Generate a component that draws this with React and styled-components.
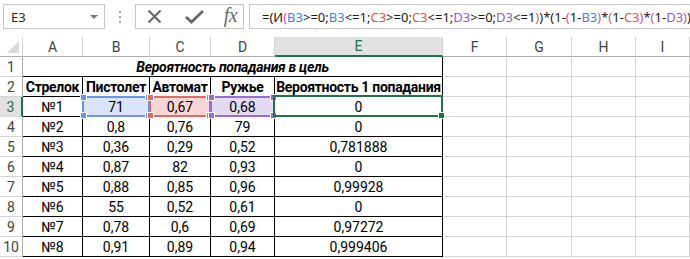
import React from 'react';
import styled, { createGlobalStyle, css } from 'styled-components';

const GlobalStyle = createGlobalStyle`
  html, body {
    margin: 0;
    padding: 0;
    background: #fff;
  }
  body {
    font-family: Roboto, "Liberation Sans", sans-serif;
    overflow: hidden;
  }
`;

const GREEN = '#217346';

const FormulaBar = styled.div`
  display: flex;
  align-items: center;
  height: 37px;
  box-sizing: border-box;
  padding: 3px 0 7px 3px;
  gap: 0;
`;

const NameBox = styled.div`
  width: 102px;
  height: 25px;
  box-sizing: border-box;
  border: 1px solid #c6c6c6;
  display: flex;
  align-items: center;
  justify-content: space-between;
  padding: 0 6px 0 7px;
  font-family: "Noto Sans", "Open Sans", sans-serif;
  font-size: 13px;
  color: #262626;
`;

const DropArrow = styled.span`
  width: 0;
  height: 0;
  border-left: 4px solid transparent;
  border-right: 4px solid transparent;
  border-top: 4px solid #7a7a7a;
  margin-top: 1px;
`;

const Grip = styled.div`
  width: 30px;
  display: flex;
  flex-direction: column;
  align-items: center;
  gap: 3px;

  span {
    width: 2px;
    height: 2px;
    background: #a6a6a6;
  }
`;

const Buttons = styled.div`
  width: 109px;
  height: 25px;
  box-sizing: border-box;
  border: 1px solid #c6c6c6;
  display: flex;
  align-items: center;
  padding-left: 11px;
`;

const IconSlot = styled.div`
  width: ${(p) => p.$w}px;
  display: flex;
  align-items: center;
`;

const Fx = styled.span`
  font-family: "Liberation Serif", serif;
  font-style: italic;
  font-size: 20px;
  color: #6a6a6a;
  line-height: 1;
  margin-top: -3px;
  letter-spacing: -0.5px;
`;

const FormulaInput = styled.div`
  flex: 1;
  margin-left: 5px;
  height: 25px;
  box-sizing: border-box;
  border: 1px solid #c6c6c6;
  border-right: none;
  display: flex;
  align-items: center;
  padding-left: 12px;
  white-space: nowrap;
  overflow: hidden;
  font-family: "Noto Sans", "Open Sans", sans-serif;
  font-size: 13px;
  color: #1a1a1a;
`;

const refColors = {
  b: '#4f7fe0',
  c: '#e05353',
  d: '#8a5cc8',
  p: '#e0508a',
};

const Tok = styled.span`
  color: ${(p) => refColors[p.$c] || 'inherit'};
`;

const Sheet = styled.div`
  display: grid;
  grid-template-columns: 23px 60px 67px 61px 64px 168px 64px 65px 64px 1fr;
  grid-auto-rows: 20px;
  font-family: Roboto, "Liberation Sans", sans-serif;
  font-size: 14px;
  color: #000;
`;

const Corner = styled.div`
  box-sizing: border-box;
  border-right: 1px solid #d4d4d4;
  border-bottom: 1px solid #ababab;
  position: relative;

  &::after {
    content: '';
    position: absolute;
    right: 3px;
    bottom: 3px;
    width: 0;
    height: 0;
    border-left: 12px solid transparent;
    border-bottom: 12px solid #dadada;
  }
`;

const ColHead = styled.div`
  box-sizing: border-box;
  border-right: 1px solid #d4d4d4;
  border-bottom: 1px solid #ababab;
  display: flex;
  align-items: center;
  justify-content: center;
  color: #444;
  font-size: 14px;
  ${(p) =>
    p.$active &&
    css`
      background: #e1e1e1;
      color: ${GREEN};
      border-bottom: 2px solid ${GREEN};
    `}
`;

const RowHead = styled.div`
  box-sizing: border-box;
  border-right: 1px solid #ababab;
  border-bottom: 1px solid #d4d4d4;
  display: flex;
  align-items: center;
  justify-content: center;
  color: #444;
  font-size: 14px;
  ${(p) =>
    p.$active &&
    css`
      background: #e1e1e1;
      color: ${GREEN};
      border-right: 2px solid ${GREEN};
    `}
`;

const fills = {
  blue: { bg: '#dae3f8', line: '#6d93e8' },
  red: { bg: '#f8d6d6', line: '#e06a6a' },
  purple: { bg: '#e3d9f1', line: '#9370cc' },
};

const Cell = styled.div`
  box-sizing: border-box;
  position: relative;
  border-right: 1px solid ${(p) => (p.$table ? '#000' : '#d4d4d4')};
  border-bottom: 1px solid ${(p) => (p.$table ? '#000' : '#d4d4d4')};
  display: flex;
  align-items: center;
  justify-content: center;
  white-space: nowrap;
  font-weight: ${(p) => (p.$bold ? 700 : 400)};
  font-style: ${(p) => (p.$italic ? 'italic' : 'normal')};
  grid-column: ${(p) => (p.$span ? `span ${p.$span}` : 'auto')};
  background: ${(p) => (p.$range ? fills[p.$range].bg : 'transparent')};
  letter-spacing: ${(p) => (p.$bold ? '-0.3px' : '0')};
`;

const RangeFrame = styled.div`
  position: absolute;
  left: -1px;
  top: -1px;
  right: -1px;
  bottom: -1px;
  border: 2px solid ${(p) => fills[p.$range].line};
  pointer-events: none;
  z-index: 1;
`;

const Knob = styled.span`
  position: absolute;
  width: 5px;
  height: 5px;
  background: ${(p) => fills[p.$range].line};
  border: 1px solid #fff;
  ${(p) => (p.$top ? 'top: -4px;' : 'bottom: -4px;')}
  ${(p) => (p.$left ? 'left: -4px;' : 'right: -4px;')}
`;

const Selection = styled.div`
  position: absolute;
  left: -2px;
  top: -2px;
  right: -1px;
  bottom: -1px;
  border: 2px solid ${GREEN};
  z-index: 2;
`;

const FillHandle = styled.span`
  position: absolute;
  right: -4px;
  bottom: -4px;
  width: 5px;
  height: 5px;
  background: ${GREEN};
  border: 1px solid #fff;
`;

const cols = ['A', 'B', 'C', 'D', 'E', 'F', 'G', 'H', 'I'];

const data = [
  ['№1', '71', '0,67', '0,68', '0'],
  ['№2', '0,8', '0,76', '79', '0'],
  ['№3', '0,36', '0,29', '0,52', '0,781888'],
  ['№4', '0,87', '82', '0,93', '0'],
  ['№5', '0,88', '0,85', '0,96', '0,99928'],
  ['№6', '55', '0,52', '0,61', '0'],
  ['№7', '0,78', '0,6', '0,69', '0,97272'],
  ['№8', '0,91', '0,89', '0,94', '0,999406'],
];

const headers = ['Стрелок', 'Пистолет', 'Автомат', 'Ружье', 'Вероятность 1 попадания'];

const ranges = [null, 'blue', 'red', 'purple', null];

const formula = [
  ['=(И', ''], ['(', 'p'], ['B3', 'b'], ['>=0;', ''], ['B3', 'b'], ['<=1;', ''],
  ['C3', 'c'], ['>=0;', ''], ['C3', 'c'], ['<=1;', ''], ['D3', 'd'], ['>=0;', ''],
  ['D3', 'd'], ['<=1', ''], [')', 'p'], [')*(1-', ''], ['(', 'p'], ['1-', ''],
  ['B3', 'b'], [')', 'p'], ['*', ''], ['(', 'p'], ['1-', ''], ['C3', 'c'], [')', 'p'],
  ['*', ''], ['(', 'p'], ['1-', ''], ['D3', 'd'], [')', 'p'], [')', ''],
];

// empty cells F..I
function Blanks({ row }) {
  return [0, 1, 2, 3].map((i) => <Cell key={`${row}-b${i}`} />);
}

export default function App() {
  return (
    <>
      <GlobalStyle />
      <FormulaBar>
        <NameBox>
          E3
          <DropArrow />
        </NameBox>
        <Grip>
          <span />
          <span />
          <span />
        </Grip>
        <Buttons>
          <IconSlot $w={40}>
            <svg width="15" height="15" viewBox="0 0 15 15">
              <path d="M1.5 1.5 L13.5 13.5 M13.5 1.5 L1.5 13.5" stroke="#6a6a6a" strokeWidth="2.2" fill="none" />
            </svg>
          </IconSlot>
          <IconSlot $w={40}>
            <svg width="19" height="15" viewBox="0 0 19 15">
              <path d="M1 8 L6.5 13 L18 2" stroke="#6a6a6a" strokeWidth="3" fill="none" />
            </svg>
          </IconSlot>
          <IconSlot $w={20}>
            <Fx>fx</Fx>
          </IconSlot>
        </Buttons>
        <FormulaInput>
          {formula.map(([t, c], i) => (
            <Tok key={i} $c={c}>
              {t}
            </Tok>
          ))}
        </FormulaInput>
      </FormulaBar>

      <Sheet>
        <Corner />
        {cols.map((c) => (
          <ColHead key={c} $active={c === 'E'}>
            {c}
          </ColHead>
        ))}

        <RowHead>1</RowHead>
        <Cell $table $span={5} $bold $italic>
          Вероятность попадания в цель
        </Cell>
        <Blanks row={1} />

        <RowHead>2</RowHead>
        {headers.map((h) => (
          <Cell key={h} $table $bold>
            {h}
          </Cell>
        ))}
        <Blanks row={2} />

        {data.map((r, ri) => (
          <React.Fragment key={ri}>
            <RowHead $active={ri === 0}>{ri + 3}</RowHead>
            {r.map((v, ci) => {
              const range = ri === 0 ? ranges[ci] : null;
              return (
                <Cell key={ci} $table $range={range}>
                  {v}
                  {range && (
                    <RangeFrame $range={range}>
                      <Knob $range={range} $top $left />
                      <Knob $range={range} $top />
                      <Knob $range={range} $left />
                      <Knob $range={range} />
                    </RangeFrame>
                  )}
                  {ri === 0 && ci === 4 && (
                    <Selection>
                      <FillHandle />
                    </Selection>
                  )}
                </Cell>
              );
            })}
            <Blanks row={ri + 3} />
          </React.Fragment>
        ))}
      </Sheet>
    </>
  );
}
